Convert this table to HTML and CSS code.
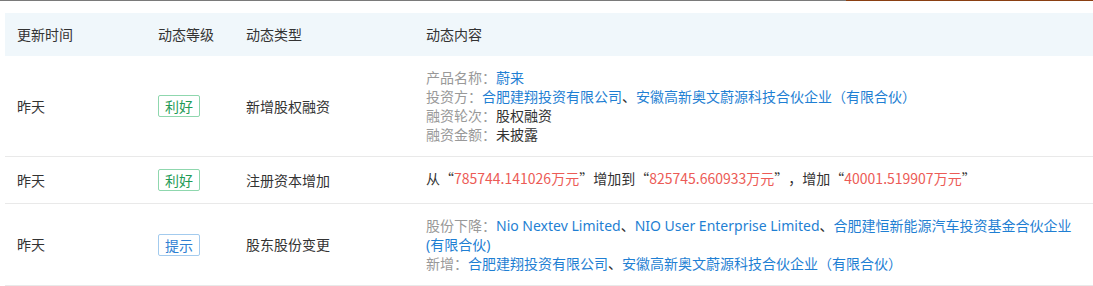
FILE: index.html
```html
<!DOCTYPE html>
<html lang="zh-CN">
<head>
<meta charset="utf-8">
<link rel="stylesheet" href="styles.css">
</head>
<body>
<div class="topline"><span class="tl-gray"></span><span class="tl-brown"></span></div>
<div class="wrap">
<table class="dyn">
  <colgroup>
    <col class="c1"><col class="c2"><col class="c3"><col class="c4">
  </colgroup>
  <thead>
    <tr><th>更新时间</th><th>动态等级</th><th>动态类型</th><th>动态内容</th></tr>
  </thead>
  <tbody>
    <tr>
      <td>昨天</td>
      <td><span class="tag good">利好</span></td>
      <td>新增股权融资</td>
      <td class="content">
        <div><span class="lbl">产品名称：</span><span class="lnk">蔚来</span></div>
        <div><span class="lbl">投资方：</span><span class="lnk">合肥建翔投资有限公司</span>、<span class="lnk">安徽高新奥文蔚源科技合伙企业（有限合伙）</span></div>
        <div><span class="lbl">融资轮次：</span>股权融资</div>
        <div><span class="lbl">融资金额：</span>未披露</div>
      </td>
    </tr>
    <tr>
      <td>昨天</td>
      <td><span class="tag good">利好</span></td>
      <td>注册资本增加</td>
      <td class="content">从“<span class="red">785744.141026万元</span>”增加到“<span class="red">825745.660933万元</span>”，增加“<span class="red">40001.519907万元</span>”</td>
    </tr>
    <tr>
      <td>昨天</td>
      <td><span class="tag tip">提示</span></td>
      <td>股东股份变更</td>
      <td class="content">
        <div><span class="lbl">股份下降：</span><span class="lnk en">Nio Nextev Limited</span>、<span class="lnk en">NIO User Enterprise Limited</span>、<span class="lnk">合肥建恒新能源汽车投资基金合伙企业<span class="en">(</span>有限合伙<span class="en">)</span></span></div>
        <div><span class="lbl">新增：</span><span class="lnk">合肥建翔投资有限公司</span>、<span class="lnk">安徽高新奥文蔚源科技合伙企业（有限合伙）</span></div>
      </td>
    </tr>
  </tbody>
</table>
</div>
</body>
</html>
```
FILE: styles.css
```css
html, body {
  margin: 0;
  padding: 0;
  background: #fff;
}
body {
  font-family: "Noto Sans CJK SC", "Noto Sans", sans-serif;
  font-size: 14px;
  color: #333;
  overflow: hidden;
  text-spacing-trim: space-all;
}
.topline {
  display: flex;
  height: 1px;
}
.tl-gray {
  width: 846px;
  background: #7a7a7a;
}
.tl-brown {
  flex: 1;
  background: #8a3f12;
}
.wrap {
  padding: 12px 0 0 5px;
}
.dyn {
  width: 1100px;
  border-collapse: collapse;
  table-layout: fixed;
}
.c1 { width: 141px; }
.c2 { width: 88px; }
.c3 { width: 180px; }
.c4 { width: 691px; }
.dyn th {
  background: #f0f7fb;
  font-weight: normal;
  text-align: left;
  padding: 12px 12px;
  line-height: 19px;
  color: #333;
}
.dyn td {
  padding: 12px 12px;
  line-height: 19px;
  vertical-align: middle;
  border-bottom: 1px solid #e9e9e9;
}
.dyn td.content {
  vertical-align: top;
  padding-right: 24px;
}
.lbl { color: #999; }
.lnk { color: #1f7fd3; }
.en { font-family: "Noto Sans", "Noto Sans CJK SC", sans-serif; }
.red { color: #ec5b56; }
.tag {
  display: inline-block;
  padding: 0 6px;
  line-height: 20px;
  border: 1px solid;
  border-radius: 2px;
  vertical-align: middle;
}
.good {
  color: #1f9b57;
  border-color: #8fd7ae;
}
.tip {
  color: #2f7fd2;
  border-color: #a3cbee;
}
```
